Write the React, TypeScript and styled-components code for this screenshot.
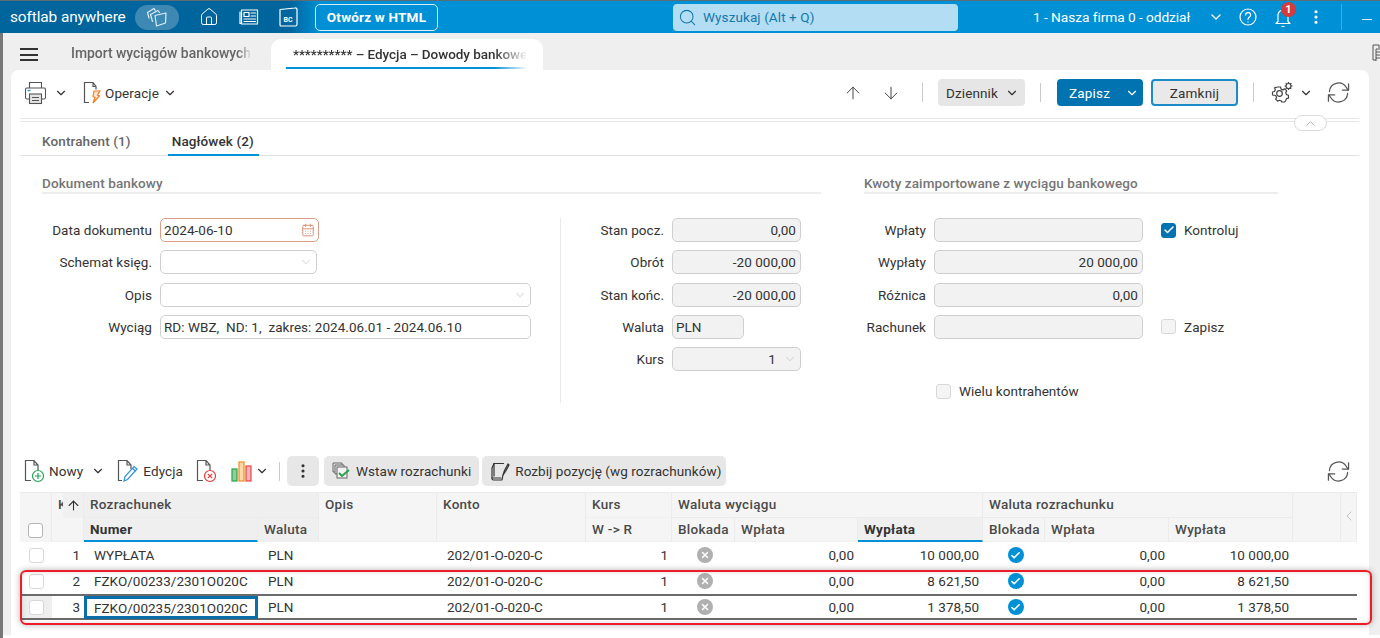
import React from "react";
import styled, { createGlobalStyle } from "styled-components";
import { ArrowDown, ArrowUp, CalendarDays, Check, ChevronDown, ChevronLeft, ChevronUp, Home, MoreVertical, Search, X } from "lucide-react";

const COLS = "32px 32px 174px 61px 118px 149px 86px 63px 123px 125px 62px 124px 124px 48px 16px";

const Global = createGlobalStyle`
  html, body { margin: 0; padding: 0; width: 1380px; height: 638px; overflow: hidden; background: #fff; }
  body { font-family: Roboto, "Noto Sans", sans-serif; font-size: 13.5px; color: #333; }
  * { box-sizing: border-box; }
`;

const Page = styled.div`
  width: 1380px; height: 638px; display: flex; flex-direction: column; overflow: hidden; position: relative;
`;
const TopBar = styled.header`
  height: 33px; flex: none; display: flex; align-items: center; color: #fff; padding-left: 10px;
  background: linear-gradient(90deg, #00659d 0, #00659d 290px, #0090d6 320px, #0090d6 100%);
  border-top: 1px solid #5d6b75;
`;
const Logo = styled.span`font-size: 15.4px; width: 125px; flex: none; letter-spacing: -0.1px;`;
const ModulePill = styled.div`
  width: 44px; height: 25px; border-radius: 13px; background: rgba(255,255,255,.24); display: flex; align-items: center; justify-content: center; flex: none;
`;
const TopIcon = styled.span`
  width: 20px; height: 20px; display: flex; align-items: center; justify-content: center; flex: none; margin-left: ${p => p.$ml}px;
`;
const HtmlButton = styled.button`
  width: 123px; height: 27px; margin-left: 17px; flex: none; border: 1px solid #d7eefa; border-radius: 5px; background: transparent; color: #fff;
  font: 700 13.5px Roboto, sans-serif; letter-spacing: .2px; padding: 0;
`;
const SearchBox = styled.div`
  width: 285px; height: 27px; margin-left: 235px; flex: none; border-radius: 4px; background: #b3ddf3; color: #1478ad; display: flex; align-items: center; gap: 6px; padding-left: 5px; font-size: 13.5px; letter-spacing: .1px;
`;
const Company = styled.span`font-size: 13.7px; width: 158px; margin-left: 75px; flex: none; white-space: nowrap; letter-spacing: -.05px;`;
const Badge = styled.span`
  position: absolute; top: -5px; left: 8px; width: 15px; height: 15px; border-radius: 50%; background: #d63a3a; color: #fff; font: 700 11px/15px Roboto, sans-serif; text-align: center;
`;
const BellWrap = styled.span`position: relative; width: 20px; height: 20px; margin-left: 15px; flex: none; display: flex; justify-content: center; align-items: center;`;
const TopSep = styled.span`width: 1px; height: 26px; background: rgba(255,255,255,.25); margin-left: 15px; flex: none;`;
const Minus = styled.span`width: 10px; height: 1.5px; background: #d7eefa; margin-left: 20px; margin-top: 5px; flex: none;`;

const TabStrip = styled.nav`
  height: 37px; flex: none; display: flex; background: #efefef; border-left: 3px solid #777; padding-left: 17px; position: relative;
`;
const Burger = styled.div`
  width: 18px; margin-top: 15px; height: 13px; border-top: 2px solid #333; border-bottom: 2px solid #333; position: relative; flex: none;
  &::after { content: ""; position: absolute; left: 0; right: 0; top: 3.5px; height: 2px; background: #333; }
`;
const TabIdle = styled.div`
  width: 181px; margin-left: 33px; margin-top: 12px; font-weight: 500; color: #666; font-size: 13.9px; white-space: nowrap; overflow: hidden; flex: none;
  mask-image: linear-gradient(90deg, #000 92%, transparent);
`;
const TabActive = styled.div`
  width: 272px; margin-left: 19px; margin-top: 6px; flex: none; background: #fff; border-radius: 10px 10px 0 0; padding: 0 15px; position: relative;
`;
const TabActiveText = styled.div`
  height: 30px; border-bottom: 2px solid #0090d6; font-weight: 500; color: #333; line-height: 22px; padding-top: 4px; padding-left: 7px; white-space: nowrap; overflow: hidden; font-size: 13.5px; letter-spacing: -.05px;
  mask-image: linear-gradient(90deg, #000 86%, transparent);
`;
const EdgeIcon = styled.span`position: absolute; left: 1369px; top: 11px; width: 11px; height: 18px; color: #555;`;

const Main = styled.div`
  flex: 1; display: flex; padding-left: 8px; padding-right: 11px; min-height: 0; border-left: 3px solid #777;
  background: linear-gradient(#efefef calc(100% - 3px), #fff calc(100% - 3px));
`;
const Card = styled.main`
  flex: 1; background: #fff; border-radius: 8px 8px 0 0; padding: 0 9px 0 9px; display: flex; flex-direction: column; min-width: 0;
`;
const Toolbar = styled.div`
  height: 48px; flex: none; display: flex; align-items: center; padding: 0 0 3px 5px;
  color: #333; position: relative;
`;
const ToolText = styled.span`font-size: 13.5px; letter-spacing: .1px; margin-left: ${p => p.$ml || 0}px;`;
const Spacer = styled.div`flex: 1;`;
const IconSlot = styled.span`
  display: inline-flex; align-items: center; justify-content: center; flex: none; width: ${p => p.$w}px; height: 26px; margin-left: ${p => p.$ml || 0}px;
`;
const VSep = styled.span`width: 1px; height: 19px; background: #c9c9c9; flex: none; margin-left: ${p => p.$ml}px;`;
const GreyDrop = styled.div`
  width: 87px; height: 27px; margin-left: 15px; border-radius: 4px; background: #e6e6e6; flex: none; display: flex; align-items: center; justify-content: space-between; padding: 0 6px 0 8px; letter-spacing: .1px;
`;
const SaveSplit = styled.div`
  width: 86px; height: 27px; margin-left: 16px; border-radius: 4px; background: #0073b0; color: #fff; flex: none; display: flex; align-items: center; justify-content: space-between; padding: 0 4px 0 12px; letter-spacing: .2px;
`;
const CloseBtn = styled.button`
  width: 87px; height: 27px; margin-left: 8px; border-radius: 4px; border: 2px solid #1a8cc8; background: #e9e9e9; color: #333; flex: none; font: 400 13.5px Roboto, sans-serif; letter-spacing: .2px; padding: 0;
`;
const DoubleRule = styled.div`
  height: 4px; flex: none; border-top: 1px solid #e6e6e6; border-bottom: 1px solid #e6e6e6; position: relative; margin-right: 1px;
`;
const Collapse = styled.div`
  position: absolute; right: 32px; top: -4px; width: 33px; height: 16px; background: #fff; border: 1px solid #dcdcdc; border-radius: 9px; display: flex; align-items: center; justify-content: center; color: #aaa;
`;
const TabRow = styled.div`
  height: 34px; flex: none; display: flex; border-bottom: 1px solid #e2e2e2; margin-right: 1px; padding-left: 22px; gap: 41px;
`;
const FormTab = styled.div`
  height: 34px; padding-top: 11px; color: ${p => p.$active ? "#333" : "#666"}; font-weight: 500; font-size: 13.5px; letter-spacing: .12px; white-space: nowrap;
  ${p => p.$active ? "border-bottom: 2px solid #0090d6; margin-left:-4px; padding-left:4px; padding-right: 5px;" : ""}
`;
const FormArea = styled.section`display: flex; padding-left: 22px; flex: none; height: 299px; gap: 43px;`;
const Group = styled.div`width: ${p => p.$w}px; flex: none;`;
const GroupTitle = styled.h3`
  margin: 0; height: 38px; padding-top: 19px; line-height: 17px; font-size: 13.5px; font-weight: 500; color: #757575; border-bottom: 2px solid #ededed; letter-spacing: .1px; white-space: nowrap;
`;
const GroupBody = styled.div`display: flex; padding-top: 24px;`;
const Fields = styled.div`
  width: ${p => p.$w}px; flex: none; display: grid; grid-template-columns: ${p => p.$label}px 1fr; column-gap: 8px; grid-auto-rows: 24px; row-gap: 8.3px; align-content: start; align-items: center;
`;
const Divider = styled.div`width: 1px; height: 185px; background: #e8e8e8; flex: none;`;
const Label = styled.label`text-align: right; font-size: 13.5px; color: #333; white-space: nowrap; letter-spacing: .04px;`;
const Input = styled.div`
  height: 24px; width: ${p => p.$w ? p.$w + "px" : "100%"}; border: 1px solid ${p => p.$err ? "#dc9d88" : "#cfcfcf"}; border-radius: 5px; background: ${p => p.$ro ? "#f2f2f2" : "#fff"};
  display: flex; align-items: center; justify-content: ${p => p.$right ? "flex-end" : "flex-start"}; padding: 0 ${p => p.$pr || 4}px 0 3px; font-size: 13.5px; color: #333; letter-spacing: .04px; white-space: nowrap; gap: 2px; position: relative;
`;
const InputEnd = styled.span`position: absolute; right: 3px; top: 3px; height: 16px; display: flex; align-items: center; color: ${p => p.$c || "#bbb"};`;
const CheckList = styled.div`
  display: grid; grid-auto-rows: 24px; row-gap: 8.3px; margin-left: 19px; align-items: center;
`;
const CheckLine = styled.div`
  display: flex; align-items: center; gap: 8px; font-size: 13.5px; letter-spacing: .05px; white-space: nowrap; height: 24px;
`;
const MultiCheck = styled(CheckLine)`margin-left: 2px;`;
const Box = styled.span`
  width: 15px; height: 15px; flex: none; border-radius: 3px; display: inline-flex; align-items: center; justify-content: center;
  background: ${p => p.$on ? "#0073b0" : p.$white ? "#fff" : "#f4f4f4"}; border: 1px solid ${p => p.$on ? "#0073b0" : p.$strong ? "#b5b5b5" : "#d8d8d8"}; color: #fff;
`;

const GridBar = styled.div`
  height: 30px; flex: none; display: flex; align-items: center; padding-left: 4px; color: #333; margin-top: 1px;
`;
const ChipBtn = styled.button`
  height: 30px; flex: none; border: 0; background: #e7e7e7; border-radius: 5px; display: flex; align-items: center; gap: ${p => p.$gap || 6}px; color: #333; font: 400 13.5px Roboto, sans-serif; letter-spacing: .07px; padding: ${p => p.$pad || "0 9px"}; margin-left: ${p => p.$ml}px; white-space: nowrap;
`;
const TableWrap = styled.div`margin-top: 6px; width: 1337px; flex: none; position: relative;`;
const HeadGrid = styled.div`
  display: grid; grid-template-columns: ${COLS}; grid-template-rows: 25px 24px; background: #f5f5f5; border-top: 1px solid #ebebeb;
`;
const HeadCell = styled.div`
  grid-column: ${p => p.$col}; grid-row: ${p => p.$row}; padding: ${p => p.$pad || "2px 0 0 6px"}; font-size: 13.5px; font-weight: ${p => p.$sorted ? 700 : 500}; color: ${p => p.$sorted ? "#333" : p.$muted ? "#bbb" : "#4a4a4a"}; letter-spacing: .28px; line-height: 19px; white-space: nowrap; overflow: hidden;
  background: ${p => p.$bg || "transparent"}; border-right: 1px solid #ebebeb; border-bottom: ${p => p.$sorted ? "2px solid #0090d6" : p.$line ? "1px solid #ebebeb" : "1px solid #f0f0f0"};
`;
const SortCell = styled.div`
  grid-column: 2; grid-row: 1 / 2; display: flex; align-items: center; justify-content: flex-end; padding-right: 3px; border-right: 1px solid #ebebeb; position: relative; font-size: 13.5px; font-weight: 500; color: #4a4a4a; overflow: hidden;
`;
const SortK = styled.span`position: absolute; left: 6px; top: 3px;`;
const SortArrow = styled.span`position:absolute; left: 11px; top: 0; width: 21px; height: 25px; background: #f0f0f0; display:flex; align-items:center; justify-content:center; color:#333;`;
const CheckHead = styled.div`grid-column: 1; grid-row: 1 / 3; border-right: 1px solid #ebebeb; display:flex; align-items:flex-end; justify-content:center; padding-bottom: 4px;`;
const Row = styled.div`
  display: grid; grid-template-columns: ${COLS}; height: ${p => p.$h}px; border-bottom: ${p => p.$line ? "2.5px solid #6b6b6b" : "none"};
`;
const Cell = styled.div`
  padding: 0 ${p => p.$right ? "4px" : "0"} 0 ${p => p.$right ? "0" : "10px"}; font-size: 13.5px; letter-spacing: .02px; color: #333; display: flex; align-items: center; justify-content: ${p => p.$right ? "flex-end" : p.$center ? "center" : "flex-start"}; white-space: nowrap;
  ${p => p.$center ? "padding: 0;" : ""}
  ${p => p.$dot ? "padding: 0 0 0 3px;" : ""}
  background: ${p => p.$bg || "transparent"};
  ${p => p.$active ? "border: 3px solid #0a6ea8; padding-left: 7px; margin-bottom: -1px;" : ""}
`;
const Dot = styled.span`
  width: 16px; height: 16px; border-radius: 50%; background: ${p => p.$c}; color: #fff; display: inline-flex; align-items: center; justify-content: center;
`;
const Highlight = styled.div`
  position: absolute; left: 0; top: 78px; width: 1352px; height: 55px; border: 2px solid #ee1c25; border-radius: 6px; box-shadow: 0 0 6px rgba(0,0,0,.3), inset 0 0 5px rgba(0,0,0,.15); pointer-events: none;
`;

const stroke = { fill: "none", stroke: "currentColor", strokeWidth: 1.2, strokeLinecap: "round", strokeLinejoin: "round" } as const;

const Stack = () => (
  <svg width="24" height="22" viewBox="0 0 24 22" {...stroke} stroke="#d9eefa">
    <path d="M4 12 2.500 6.500 9 2.500l1.200 1.800" />
    <path d="M7.500 15.500 5.500 8.500 13 4.500l1.500 2" />
    <path d="M10 9.500 21 7 20.500 17 11.500 20Z" />
  </svg>
);
const News = () => (
  <svg width="20" height="18" viewBox="0 0 20 18" {...stroke}>
    <rect x="2.500" y="2" width="16" height="14" /><path d="M1 4v11.500h1.500" />
    <rect x="5" y="4.500" width="5" height="4" /><path d="M12 5h4.500M12 8h4.500M5 11h11.500M5 13.500h11.500" />
  </svg>
);
const BC = () => (
  <svg width="19" height="20" viewBox="0 0 19 20" {...stroke}>
    <path d="M1 2.500 16 1a1.500 1.500 0 0 1 2 1.500v15a1.500 1.500 0 0 1-1.500 1.500H2a1 1 0 0 1-1-1Z" />
    <g fill="currentColor" stroke="none" style={{ font: "700 7px Roboto" }}><text x="4.500" y="14.500">BC</text></g>
  </svg>
);
const Help = () => (
  <svg width="18" height="18" viewBox="0 0 18 18" {...stroke}>
    <circle cx="9" cy="9" r="8" /><path d="M6.500 7c0-3.300 5.200-3.300 5.200 0 0 2-2.700 2-2.700 4.300M9 13.800v.2" />
  </svg>
);
const Bell = () => (
  <svg width="18" height="21" viewBox="0 0 18 21" {...stroke} stroke="#fff">
    <path d="M4 14.500V8a5 5 0 0 1 10 0v6.500l2 2H2Z" /><path d="M8 19.500h2" />
  </svg>
);
const Printer = () => (
  <svg width="21" height="24" viewBox="0 0 21 24" fill="none" stroke="#555" strokeWidth="1.100">
    <path d="M4.500 7V1.500h12V7M4 18H2A1.500 1.500 0 0 1 .5 16.500V8.500A1.500 1.500 0 0 1 2 7h17A1.500 1.500 0 0 1 20.500 8.500v8A1.500 1.500 0 0 1 19 18h-2" />
    <rect x="4.500" y="13" width="12" height="9.500" fill="#e4e4e4" /><path d="M7 16.500h7M7 19.500h7" /><path d="M2.500 9.500h3" stroke="#2b9bd8" strokeWidth="1.500" />
  </svg>
);
const DocOp = () => (
  <svg width="19" height="23" viewBox="0 0 19 23" fill="none" strokeWidth="1.200">
    <path d="M6 21.500H1.500V1.500H10l3 4v3M10 1.500v4h3" stroke="#555" />
    <path d="M11 10h6l-2.500 4 2 1-6.500 7 2-5.500-2-1Z" stroke="#f07c28" fill="#fde6d3" />
  </svg>
);
const Refresh = ({ s = 22 }: { s?: number }) => (
  <svg width={s} height={s} viewBox="0 0 24 24" fill="none" stroke="#555" strokeWidth="1.300" strokeLinecap="round" strokeLinejoin="round">
    <path d="M2.500 11A9.500 9.500 0 0 1 20 6.500l2 3" /><path d="M22.500 3v6.500H16" />
    <path d="M21.500 13A9.500 9.500 0 0 1 4 17.500l-2-3" /><path d="M1.500 21v-6.500H8" />
  </svg>
);
const Gear = () => (
  <svg width="22" height="24" viewBox="0 0 22 24" fill="none" stroke="#444" strokeWidth="1.200" strokeLinejoin="round">
    <path d="M6.500 9h3l.5 2 1.800.9 1.900-1 2 2-1 1.900.8 1.800 2 .6v3l-2 .5-.8 1.800-1 1.500h-3l-.3-1-1.900-.7-1.900.9-2-2 1-1.800-.9-1.900L1.500 17v-3l2-.5.800-1.900-.8-1.800Z" transform="translate(0 -3)" />
    <circle cx="8.500" cy="12.500" r="2.800" />
    <circle cx="17.500" cy="5" r="2.500" /><path d="M17.500 1v1.500M17.500 7.500V9M13.500 5H15M20 5h1.500M14.700 2.200l1 1M19.300 6.800l1 1M14.700 7.800l1-1M19.300 3.200l1-1" />
  </svg>
);
const DocNew = () => (
  <svg width="21" height="24" viewBox="0 0 21 24" fill="none" strokeWidth="1.200">
    <path d="M7 21.500H1.500V1.500H10l4 4.500v5M10 1.500V6h4" stroke="#555" />
    <circle cx="14" cy="17" r="5.500" stroke="#23a455" /><path d="M14 14v6M11 17h6" stroke="#23a455" />
  </svg>
);
const DocEdit = () => (
  <svg width="21" height="24" viewBox="0 0 21 24" fill="none" strokeWidth="1.200">
    <path d="M5 21.500H1.500V1.500H10l4 4.500v4M10 1.500V6h4" stroke="#555" />
    <path d="M7 22l1-4.500L17 7.500l3 2.500-9.500 10.500Z" stroke="#2f8fde" /><path d="M15.500 9.500l3 2.500" stroke="#2f8fde" />
  </svg>
);
const DocDel = () => (
  <svg width="21" height="24" viewBox="0 0 21 24" fill="none" strokeWidth="1.200">
    <path d="M7 21.500H1.500V1.500H10l4 4.500v5M10 1.500V6h4" stroke="#555" />
    <circle cx="14" cy="17" r="5.500" stroke="#e33b3b" /><path d="M11.800 14.800l4.400 4.400M16.200 14.800l-4.400 4.400" stroke="#e33b3b" />
  </svg>
);
const Bars = () => (
  <svg width="21" height="21" viewBox="0 0 21 21" strokeWidth="1.200">
    <rect x="1" y="8" width="5" height="12" fill="#8fcf9d" stroke="#27a24a" />
    <rect x="8" y="1" width="5" height="19" fill="#fbd9a6" stroke="#ef8c22" />
    <rect x="15" y="5" width="5" height="15" fill="#f6b4b4" stroke="#e34747" />
  </svg>
);
const Copies = () => (
  <svg width="19" height="18" viewBox="0 0 19 18" fill="none" stroke="#666" strokeWidth="1">
    <path d="M1 1h9v2M1 1v9h2" /><path d="M3 3h9v2M3 3v9h2" /><rect x="5" y="5" width="10" height="11" fill="#f2f2f2" />
    <path d="M7 11l3 3 7-6" stroke="#27a24a" strokeWidth="2" />
  </svg>
);
const Split = () => (
  <svg width="20" height="20" viewBox="0 0 20 20" fill="none" stroke="#333" strokeWidth="1.200" strokeLinejoin="round" strokeLinecap="round">
    <path d="M4 2.500h9.500M4 2.500 2 7v10.500c0 1 1 1.500 1.500 1.500H12l1-5" />
    <path d="M2 17h9M4 2.500V15" />
    <path d="M13 14l1.500-4.500L18 3l1 1-3.500 6.500Z" />
  </svg>
);
const Edge = () => (
  <svg width="11" height="18" viewBox="0 0 11 18" fill="none" stroke="currentColor" strokeWidth="1">
    <path d="M1 1h6v3M1 1v15h3M4 5h7M4 8h7M4 11h7M4 14h7M4 5v12" />
  </svg>
);

const Chev = ({ s = 14, c = "#333", w = 2 }: { s?: number; c?: string; w?: number }) => <ChevronDown size={s} color={c} strokeWidth={w} />;
const Faint = () => <Chev c="#bdbdbd" w={1.200} />;

const rows = [
  { n: "1", num: "WYPŁATA", out: "10 000,00", h: 26 },
  { n: "2", num: "FZKO/00233/2301O020C", out: "8 621,50", h: 28, line: true },
  { n: "3", num: "FZKO/00235/2301O020C", out: "1 378,50", h: 24, line: true, active: true },
];

export default function App() {
  return (
    <Page>
      <Global />
      <TopBar>
        <Logo>softlab anywhere</Logo>
        <ModulePill><Stack /></ModulePill>
        <TopIcon $ml={20}><Home size={20} strokeWidth={1.200} /></TopIcon>
        <TopIcon $ml={20}><News /></TopIcon>
        <TopIcon $ml={19}><BC /></TopIcon>
        <HtmlButton>Otwórz w HTML</HtmlButton>
        <SearchBox><Search size={19} strokeWidth={1.300} />Wyszukaj (Alt + Q)</SearchBox>
        <Company>1 - Nasza firma 0 - oddział</Company>
        <TopIcon $ml={15}><Chev s={16} c="#fff" /></TopIcon>
        <TopIcon $ml={12}><Help /></TopIcon>
        <BellWrap><Bell /><Badge>1</Badge></BellWrap>
        <TopIcon $ml={13}><MoreVertical size={18} strokeWidth={2.200} /></TopIcon>
        <TopSep />
        <Minus />
      </TopBar>
      <TabStrip>
        <Burger />
        <TabIdle>Import wyciągów bankowych</TabIdle>
        <TabActive><TabActiveText>********** – Edycja – Dowody bankowe</TabActiveText></TabActive>
        <EdgeIcon><Edge /></EdgeIcon>
      </TabStrip>
      <Main>
        <Card>
          <Toolbar>
            <Printer />
            <IconSlot $w={14} $ml={8}><Chev /></IconSlot>
            <IconSlot $w={20} $ml={14}><DocOp /></IconSlot>
            <ToolText $ml={3}>Operacje</ToolText>
            <IconSlot $w={14} $ml={4}><Chev /></IconSlot>
            <Spacer />
            <IconSlot $w={20}><ArrowUp size={22} strokeWidth={1.200} color="#444" /></IconSlot>
            <IconSlot $w={20} $ml={18}><ArrowDown size={22} strokeWidth={1.200} color="#444" /></IconSlot>
            <VSep $ml={21} />
            <GreyDrop>Dziennik<Chev /></GreyDrop>
            <VSep $ml={15} />
            <SaveSplit>Zapisz<Chev c="#fff" /></SaveSplit>
            <CloseBtn>Zamknij</CloseBtn>
            <VSep $ml={15} />
            <IconSlot $w={22} $ml={17}><Gear /></IconSlot>
            <IconSlot $w={14} $ml={6}><Chev /></IconSlot>
            <IconSlot $w={23} $ml={14}><Refresh s={23} /></IconSlot>
            <IconSlot $w={10} />
          </Toolbar>
          <DoubleRule><Collapse><ChevronUp size={15} strokeWidth={1.500} /></Collapse></DoubleRule>
          <TabRow>
            <FormTab>Kontrahent (1)</FormTab>
            <FormTab $active>Nagłówek (2)</FormTab>
          </TabRow>
          <FormArea>
            <Group $w={779}>
              <GroupTitle>Dokument bankowy</GroupTitle>
              <GroupBody>
                <Fields $w={518} $label={110}>
                  <Label>Data dokumentu</Label>
                  <Input $err $w={159}>2024-06-10<InputEnd $c="#d9927a"><CalendarDays size={14} strokeWidth={1.700} /></InputEnd></Input>
                  <Label>Schemat księg.</Label>
                  <Input $w={157}><InputEnd><Faint /></InputEnd></Input>
                  <Label>Opis</Label>
                  <Input $w={371}><InputEnd><Faint /></InputEnd></Input>
                  <Label>Wyciąg</Label>
                  <Input $w={371}>RD: WBZ,&nbsp; ND: 1,&nbsp; zakres: 2024.06.01 - 2024.06.10</Input>
                </Fields>
                <Divider />
                <Fields $w={240} $label={103}>
                  <Label>Stan pocz.</Label>
                  <Input $ro $right $w={129}>0,00</Input>
                  <Label>Obrót</Label>
                  <Input $ro $right $w={129}>-20 000,00</Input>
                  <Label>Stan końc.</Label>
                  <Input $ro $right $w={129}>-20 000,00</Input>
                  <Label>Waluta</Label>
                  <Input $ro $w={72}>PLN</Input>
                  <Label>Kurs</Label>
                  <Input $ro $right $w={129} $pr={24}>1<InputEnd><Faint /></InputEnd></Input>
                </Fields>
              </GroupBody>
            </Group>
            <Group $w={414}>
              <GroupTitle>Kwoty zaimportowane z wyciągu bankowego</GroupTitle>
              <GroupBody>
                <Fields $w={278} $label={62}>
                  <Label>Wpłaty</Label>
                  <Input $ro $w={209} />
                  <Label>Wypłaty</Label>
                  <Input $ro $right $w={209}>20 000,00</Input>
                  <Label>Różnica</Label>
                  <Input $ro $right $w={209}>0,00</Input>
                  <Label>Rachunek</Label>
                  <Input $ro $w={209} />
                  <span />
                  <span />
                  <span />
                  <MultiCheck><Box />Wielu kontrahentów</MultiCheck>
                </Fields>
                <CheckList>
                  <CheckLine><Box $on><Check size={12} strokeWidth={3} /></Box>Kontroluj</CheckLine>
                  <span />
                  <span />
                  <CheckLine><Box />Zapisz</CheckLine>
                </CheckList>
              </GroupBody>
            </Group>
          </FormArea>
          <GridBar>
            <DocNew />
            <ToolText $ml={4}>Nowy</ToolText>
            <IconSlot $w={14} $ml={8}><Chev /></IconSlot>
            <IconSlot $w={21} $ml={12}><DocEdit /></IconSlot>
            <ToolText $ml={5}>Edycja</ToolText>
            <IconSlot $w={21} $ml={13}><DocDel /></IconSlot>
            <IconSlot $w={21} $ml={14}><Bars /></IconSlot>
            <IconSlot $w={14} $ml={3}><Chev /></IconSlot>
            <VSep $ml={10} />
            <ChipBtn $ml={7} $pad="0 7px"><MoreVertical size={18} strokeWidth={2.200} /></ChipBtn>
            <ChipBtn $ml={5} $pad="0 8px" $gap={5}>
              <Copies />Wstaw rozrachunki
            </ChipBtn>
            <ChipBtn $ml={3} $pad="0 5px 0 8px" $gap={5}>
              <Split />Rozbij pozycję (wg rozrachunków)
            </ChipBtn>
            <Spacer />
            <IconSlot $w={23}><Refresh s={23} /></IconSlot>
            <IconSlot $w={10} />
          </GridBar>
          <TableWrap>
            <HeadGrid>
              <CheckHead><Box $white $strong /></CheckHead>
              <SortCell><SortK>K</SortK><SortArrow><ArrowUp size={15} strokeWidth={1.700} /></SortArrow></SortCell>
              <HeadCell $col="2" $row="2 / 3" />
              <HeadCell $col="3 / 5" $row="1 / 2" $bg="#efefef" $line>Rozrachunek</HeadCell>
              <HeadCell $col="3" $row="2 / 3" $bg="#efefef" $sorted>Numer</HeadCell>
              <HeadCell $col="4" $row="2 / 3" $bg="#efefef">Waluta</HeadCell>
              <HeadCell $col="5" $row="1 / 3">Opis</HeadCell>
              <HeadCell $col="6" $row="1 / 3">Konto</HeadCell>
              <HeadCell $col="7" $row="1 / 2">Kurs</HeadCell>
              <HeadCell $col="7" $row="2 / 3">W -&gt; R</HeadCell>
              <HeadCell $col="8 / 11" $row="1 / 2" $line>Waluta wyciągu</HeadCell>
              <HeadCell $col="8" $row="2 / 3">Blokada</HeadCell>
              <HeadCell $col="9" $row="2 / 3">Wpłata</HeadCell>
              <HeadCell $col="10" $row="2 / 3" $bg="#efefef" $sorted>Wypłata</HeadCell>
              <HeadCell $col="11 / 14" $row="1 / 2" $line>Waluta rozrachunku</HeadCell>
              <HeadCell $col="11" $row="2 / 3">Blokada</HeadCell>
              <HeadCell $col="12" $row="2 / 3">Wpłata</HeadCell>
              <HeadCell $col="13" $row="2 / 3">Wypłata</HeadCell>
              <HeadCell $col="14" $row="1 / 3" />
              <HeadCell $col="15" $row="1 / 3" $pad="15px 0 0 0" $muted><ChevronLeft size={16} strokeWidth={1.300} /></HeadCell>
            </HeadGrid>
            {rows.map(r => (
              <Row key={r.n} $h={r.h} $line={r.line}>
                <Cell $center $bg={r.active ? "#eeeeee" : undefined}><Box $white /></Cell>
                <Cell $right>{r.n}</Cell>
                <Cell $active={r.active}>{r.num}</Cell>
                <Cell>PLN</Cell>
                <Cell />
                <Cell>202/01-O-020-C</Cell>
                <Cell $right>1</Cell>
                <Cell $center $dot><Dot $c="#b0b0b0"><X size={10} strokeWidth={3.500} /></Dot></Cell>
                <Cell $right>0,00</Cell>
                <Cell $right>{r.out}</Cell>
                <Cell $center $dot><Dot $c="#0090d6"><Check size={11} strokeWidth={3.500} /></Dot></Cell>
                <Cell $right>0,00</Cell>
                <Cell $right>{r.out}</Cell>
                <Cell />
                <Cell />
              </Row>
            ))}
            <Highlight />
          </TableWrap>
        </Card>
      </Main>
    </Page>
  );
}
